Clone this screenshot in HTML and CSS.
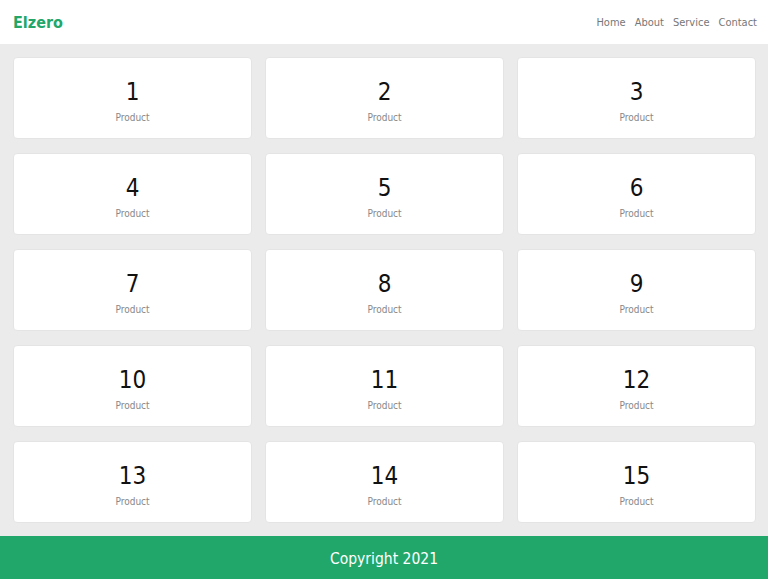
FILE: index.html
```html
<!DOCTYPE html>
<html lang="en">
<head>
<meta charset="utf-8">
<title>Elzero</title>
<link rel="stylesheet" href="styles.css">
</head>
<body>
<header class="header">
  <div class="logo">Elzero</div>
  <nav class="nav">
    <a href="#">Home</a>
    <a href="#">About</a>
    <a href="#">Service</a>
    <a href="#">Contact</a>
  </nav>
</header>
<main class="grid">
  <div class="card"><div class="num">1</div><div class="label">Product</div></div>
  <div class="card"><div class="num">2</div><div class="label">Product</div></div>
  <div class="card"><div class="num">3</div><div class="label">Product</div></div>
  <div class="card"><div class="num">4</div><div class="label">Product</div></div>
  <div class="card"><div class="num">5</div><div class="label">Product</div></div>
  <div class="card"><div class="num">6</div><div class="label">Product</div></div>
  <div class="card"><div class="num">7</div><div class="label">Product</div></div>
  <div class="card"><div class="num">8</div><div class="label">Product</div></div>
  <div class="card"><div class="num">9</div><div class="label">Product</div></div>
  <div class="card"><div class="num">10</div><div class="label">Product</div></div>
  <div class="card"><div class="num">11</div><div class="label">Product</div></div>
  <div class="card"><div class="num">12</div><div class="label">Product</div></div>
  <div class="card"><div class="num">13</div><div class="label">Product</div></div>
  <div class="card"><div class="num">14</div><div class="label">Product</div></div>
  <div class="card"><div class="num">15</div><div class="label">Product</div></div>
</main>
<footer class="footer">Copyright 2021</footer>
</body>
</html>
```
FILE: styles.css
```css
* { box-sizing: border-box; }
html, body { margin: 0; padding: 0; }
body {
  font-family: "DejaVu Sans", Verdana, sans-serif;
  font-stretch: condensed;
  background: #ebebeb;
  width: 768px;
  height: 579px;
  display: flex;
  flex-direction: column;
}
.header {
  height: 44px;
  background: #fff;
  display: flex;
  align-items: center;
  justify-content: space-between;
  padding: 0 11px 0 13px;
}
.logo {
  color: #22a76b;
  font-weight: bold;
  font-size: 16px;
}
.nav { display: flex; gap: 9px; }
.nav a {
  color: #777;
  text-decoration: none;
  font-size: 11px;
}
.grid {
  flex: 1;
  display: grid;
  grid-template-columns: repeat(3, 1fr);
  grid-auto-rows: 82px;
  gap: 14px 13px;
  padding: 13px 12px 0 13px;
}
.card {
  background: #fff;
  border-radius: 4px;
  border: 1px solid #e4e4e4;
  text-align: center;
  padding: 19px 0 0;
}
.num {
  font-size: 24px;
  line-height: 30px;
  color: #111;
}
.label {
  margin-top: 4px;
  font-size: 10px;
  line-height: 14px;
  color: #888;
}
.footer {
  height: 43px;
  background: #22a76b;
  color: #fff;
  font-size: 15.5px;
  padding-top: 3px;
  display: flex;
  align-items: center;
  justify-content: center;
}
```
